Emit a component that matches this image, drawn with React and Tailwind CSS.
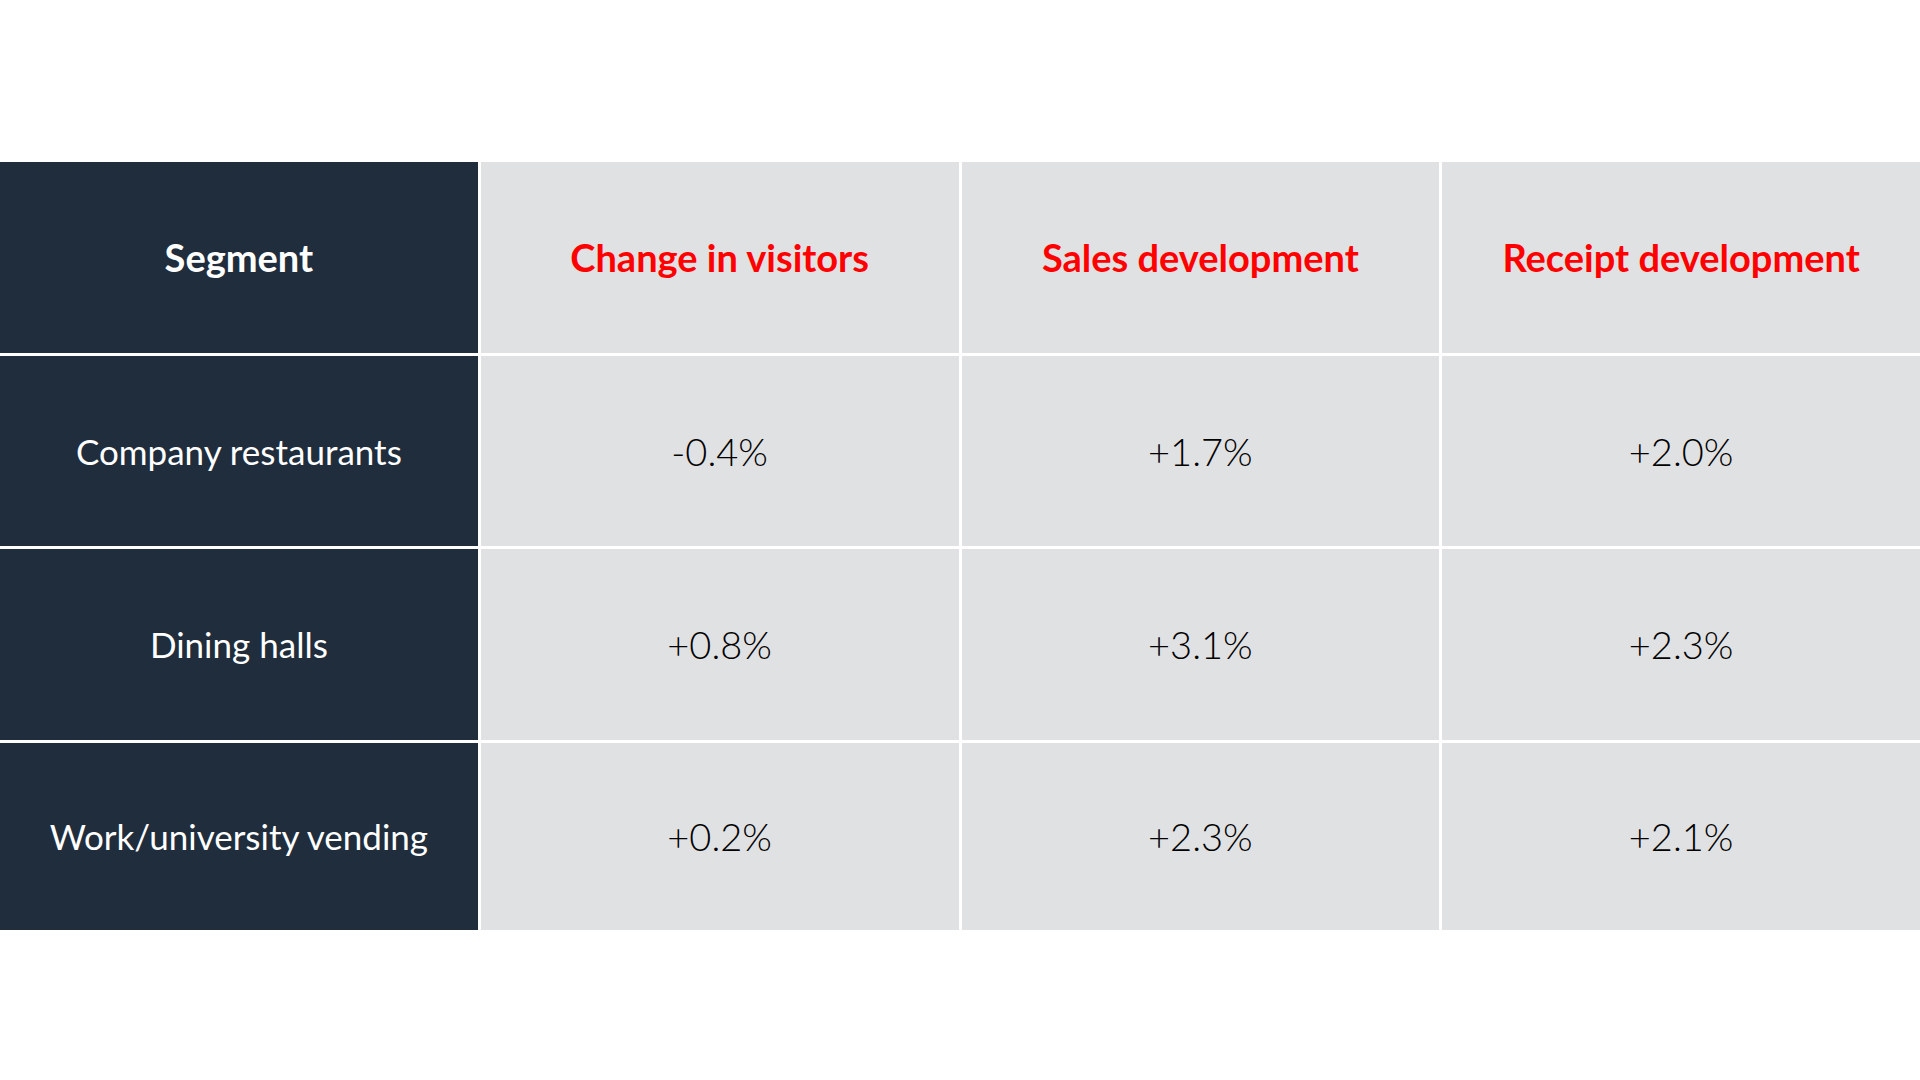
import React from 'react';

const rows = [
  { segment: 'Company restaurants', values: ['-0.4%', '+1.7%', '+2.0%'] },
  { segment: 'Dining halls', values: ['+0.8%', '+3.1%', '+2.3%'] },
  { segment: 'Work/university vending', values: ['+0.2%', '+2.3%', '+2.1%'] },
];

const headers = ['Change in visitors', 'Sales development', 'Receipt development'];

// Dark first column cell
function LabelCell({ children, bold = false }) {
  return (
    <div
      className={`bg-[#1f2d3d] text-white flex items-center justify-center ${
        bold ? 'font-bold text-[38px]' : 'font-normal text-[35px]'
      }`}
    >
      {children}
    </div>
  );
}

// Light data cell
function DataCell({ children, header = false }) {
  return (
    <div
      className={`bg-[#e0e1e3] flex items-center justify-center text-[38px] ${
        header ? 'text-[#ff0000] font-bold' : 'text-black font-light'
      }`}
    >
      {children}
    </div>
  );
}

export default function App() {
  return (
    <div
      className="w-[1920px] h-[1080px] bg-white pt-[162px]"
      style={{ fontFamily: 'Lato, "Open Sans", sans-serif' }}
    >
      <div className="grid grid-cols-4 grid-rows-[191px_190px_191px_187px] gap-[3px] bg-white">
        <LabelCell bold>Segment</LabelCell>
        {headers.map((h) => (
          <DataCell key={h} header>
            {h}
          </DataCell>
        ))}
        {rows.map((row) => (
          <React.Fragment key={row.segment}>
            <LabelCell>{row.segment}</LabelCell>
            {row.values.map((v, i) => (
              <DataCell key={i}>{v}</DataCell>
            ))}
          </React.Fragment>
        ))}
      </div>
    </div>
  );
}
